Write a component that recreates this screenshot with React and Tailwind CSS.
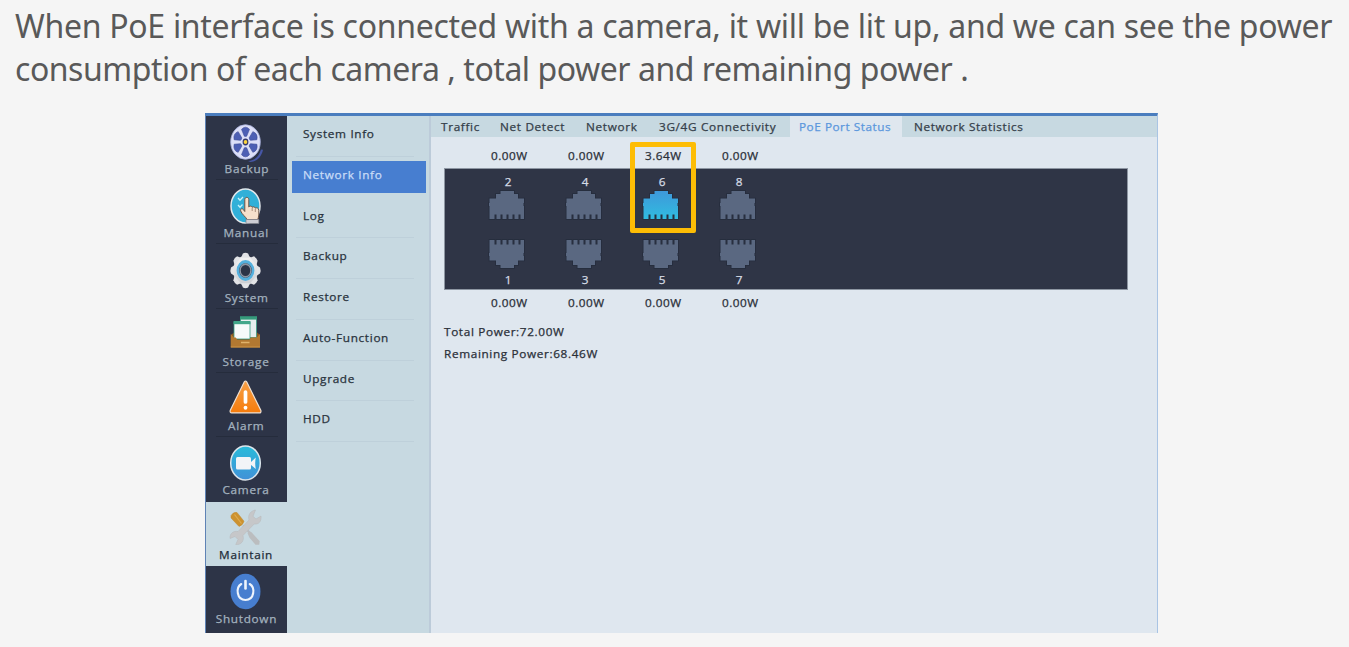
import React from "react";

function ReelIcon() {
  return (
    <svg viewBox="0 0 34 38" className="h-[38px] w-[34px] overflow-visible">
      <path d="M18 37c7-.5 10.500-4 13-11.500l2 .3c-1.500 7.500-6.500 11.900-12.500 12.200z" fill="#4656a6" />
      <ellipse cx="15.500" cy="18" rx="14.800" ry="17.300" fill="#dcdff8" stroke="#a5acd9" strokeWidth=".8" />
      <g transform="translate(15.5 18) scale(1 1.17)">
        {[0, 60, 120, 180, 240, 300].map((a) => (
          <path key={a} transform={`rotate(${a})`} d="M-1.200-5L-4-10.800Q0-14.600 4-10.800L1.200-5Q0-4.400-1.200-5z" fill="#4d5fb4" stroke="#3b4996" strokeWidth=".5" />
        ))}
        <circle r="2.900" fill="#35386b" />
        <circle r="1.800" fill="#fbd43c" />
      </g>
    </svg>
  );
}

function ManualIcon() {
  return (
    <svg viewBox="0 0 34 38" className="h-[38px] w-[34px] overflow-visible">
      <ellipse cx="15.500" cy="18" rx="14.500" ry="17" fill="#31b0d8" stroke="#e2e8ec" strokeWidth="1.500" />
      <path d="M8 10l2 2.200L13 9M8 17l2 2.200L12.500 16.500" fill="none" stroke="#c4f3fb" strokeWidth="1.300" />
      <path d="M14.800 11.500c0-2.800 4-2.800 4 0v7.500c1-1.400 3-1 3.300.3 1-1 2.900-.5 3.100.8 1.500-.8 3.600 0 3.600 2.200v4.700c0 2-.8 3-1 4.500H17c-1-2.500-5-5-6.300-8.500-.6-2.200 1.300-3 2.600-1.500l1.500 2z" fill="#f6e0cb" stroke="#6e5546" strokeWidth="1" />
      <path d="M22.200 20v3M25.300 21v3" stroke="#987b68" strokeWidth=".8" />
      <path d="M16 31.500h12.800v4H16z" fill="#cdcdd3" stroke="#83848c" strokeWidth=".7" />
    </svg>
  );
}

function GearIcon() {
  return (
    <svg viewBox="0 0 34 38" className="h-[38px] w-[34px] overflow-visible">
      <defs>
        <linearGradient id="gear" x1="0" y1="0" x2="0" y2="1">
          <stop offset="0" stopColor="#f4f4f4" />
          <stop offset="1" stopColor="#c9cbd0" />
        </linearGradient>
      </defs>
      <g transform="translate(15.5 17.5) scale(1 1.17)">
        <circle r="12.400" fill="url(#gear)" />
        {[0, 45, 90, 135, 180, 225, 270, 315].map((a) => (
          <path key={a} transform={`rotate(${a})`} d="M-4.500-11L-2.600-14.500Q0-15.700 2.600-14.500L4.500-11z" fill="#e2e3e6" />
        ))}
        <circle r="7.600" fill="#2c3448" stroke="#55b0de" strokeWidth="2.600" />
        <circle r="5.400" fill="#2c3448" stroke="#8d96a5" strokeWidth="1.400" />
      </g>
    </svg>
  );
}

function StorageIcon() {
  return (
    <svg viewBox="0 0 34 38" className="h-[38px] w-[34px] overflow-visible">
      <path d="M.8 18L4 15.500h23l3 2.500v12H.8z" fill="#8c5820" />
      <path d="M10.500.5h16v20h-16z" fill="#e7eeee" stroke="#399c83" strokeWidth=".8" />
      <path d="M10-.8h17V2.600H10z" fill="#359a7b" />
      <path d="M4 5h16v17H4z" fill="#f7fafa" stroke="#399c83" strokeWidth=".8" />
      <path d="M3.500 4h17v3.200h-17z" fill="#43a78a" />
      <path d="M.8 17l3 3.500h2l1.500 2.500h12l1.500-2.500h6L30 17v13.500H.8z" fill="#b27831" />
      <path d="M11 25.500h8.500" stroke="#e0b26a" strokeWidth="1.500" />
      <path d="M.8 29.300H30v1.200H.8z" fill="#c48d42" />
    </svg>
  );
}

function AlarmIcon() {
  return (
    <svg viewBox="0 0 34 38" className="h-[38px] w-[34px] overflow-visible">
      <defs>
        <linearGradient id="alarm" x1="0" y1="0" x2="0" y2="1">
          <stop offset="0" stopColor="#f6a047" />
          <stop offset="1" stopColor="#f67c0c" />
        </linearGradient>
      </defs>
      <path d="M14.300.8Q15.500-.8 16.700.8L30.900 29.500Q31.300 31.900 29.300 31.900H1.700Q-.3 31.900.2 29.500z" fill="url(#alarm)" stroke="#eee0d2" strokeWidth="1.200" />
      <path d="M15.500 11v10" stroke="#fff" strokeWidth="3.700" strokeLinecap="round" />
      <ellipse cx="15.500" cy="26.800" rx="1.900" ry="2" fill="#fff" />
    </svg>
  );
}

function CameraIcon() {
  return (
    <svg viewBox="0 0 34 38" className="h-[38px] w-[34px] overflow-visible">
      <defs>
        <linearGradient id="camera" x1="0" y1="0" x2="0" y2="1">
          <stop offset="0" stopColor="#29bbda" />
          <stop offset="1" stopColor="#4191d7" />
        </linearGradient>
      </defs>
      <ellipse cx="15.500" cy="18" rx="14.800" ry="17" fill="url(#camera)" stroke="#dce5eb" strokeWidth="1.500" />
      <rect x="6" y="12" width="15" height="12.500" rx="1.500" fill="#f2f4f7" />
      <path d="M20.500 17.500L25.800 12.500Q24.600 18 25.800 24L20.500 19.500z" fill="#f2f4f7" />
    </svg>
  );
}

function MaintainIcon() {
  return (
    <svg viewBox="0 0 34 38" className="h-[38px] w-[34px] overflow-visible">
      <path d="M13 15.500L20 23" stroke="#b9bdc0" strokeWidth="2" />
      <path d="M17.500 23c.5-1.800 2.500-2.200 4-.7l8.200 9-.5 3.500h-3.700l-6-7z" fill="#bbbdbf" />
      <path d="M1 5.500Q3.500 1.500 7 2.500l7 8.700q-1 4-5 5.200L1 8z" fill="#cd922f" stroke="#c08a34" strokeWidth=".5" />
      <path d="M4.500 4.500l7 9" stroke="#deab50" strokeWidth="1.200" />
      <path d="M25.500 0C20.500.8 17.500 5 19 10L8 21.500C3.500 20.500-.5 23.500 0 28.500l5-2 3 3-2.300 5c5.500.7 8.800-3.700 7.300-9L24.200 14c4.300.8 7.500-2.500 6.800-8l-5 3-3-2.700z" fill="#c6c7c9" stroke="#b7b9bb" strokeWidth=".5" />
    </svg>
  );
}

function PowerIcon() {
  return (
    <svg viewBox="0 0 34 38" className="h-[38px] w-[34px] overflow-visible">
      <ellipse cx="15.500" cy="17.500" rx="15" ry="17.700" fill="#477ecf" />
      <path d="M11.300 10C5.500 13.500 6.500 26 15.500 26S25.500 13.500 19.700 10" fill="none" stroke="#eef4fc" strokeWidth="2.100" strokeLinecap="round" />
      <path d="M15.500 7v7.500" stroke="#eef4fc" strokeWidth="2.600" strokeLinecap="round" />
    </svg>
  );
}

const NAV = [
  { label: "Backup", Icon: ReelIcon },
  { label: "Manual", Icon: ManualIcon },
  { label: "System", Icon: GearIcon },
  { label: "Storage", Icon: StorageIcon },
  { label: "Alarm", Icon: AlarmIcon },
  { label: "Camera", Icon: CameraIcon },
  { label: "Maintain", Icon: MaintainIcon, active: true },
  { label: "Shutdown", Icon: PowerIcon },
];

const SUBMENU = ["System Info", "Network Info", "Log", "Backup", "Restore", "Auto-Function", "Upgrade", "HDD"];

const TABS = [
  { label: "Traffic", box: "w-[59px] pl-[9.500px]" },
  { label: "Net Detect", box: "w-[86px] pl-[10px]" },
  { label: "Network", box: "w-[73px] pl-[10px]" },
  { label: "3G/4G Connectivity", box: "w-[141px] pl-[10px]" },
  { label: "PoE Port Status", box: "w-[112px] pl-[9px] tracking-[0.480px]", active: true },
  { label: "Network Statistics", box: "pl-[11.500px] tracking-[0.560px]" },
];

const TOP_PORTS = [
  { id: 2, power: "0.00W" },
  { id: 4, power: "0.00W" },
  { id: 6, power: "3.64W", lit: true },
  { id: 8, power: "0.00W" },
];

const BOTTOM_PORTS = [
  { id: 1, power: "0.00W" },
  { id: 3, power: "0.00W" },
  { id: 5, power: "0.00W" },
  { id: 7, power: "0.00W" },
];

/* Text drawn slightly wider than the font's own proportions. */
function Wide({ children, center }) {
  return (
    <span className={`inline-block scale-x-[1.12] ${center ? "origin-center" : "origin-left"}`}>{children}</span>
  );
}

function PortIcon({ lit, flipped }) {
  return (
    <svg viewBox="-1 -1 37 30" className={flipped ? "h-[30px] w-[37px] -scale-y-100" : "h-[30px] w-[37px]"}>
      <defs>
        <linearGradient id="lit" x1="0" y1="0" x2="0" y2="1">
          <stop offset="0" stopColor="#3e98da" />
          <stop offset="1" stopColor="#30bce0" />
        </linearGradient>
      </defs>
      <path
        d="M11.500 0H25V3H29V7.500H35V12H34.500V15H35V28H31.500V23.500H29.500V28H25.500V23.500H23.500V28H19.500V23.500H17.500V28H13.500V23.500H11.500V28H7.500V23.500H5.500V28H.5V15H0V12H.5V7.500H7V3H11.500Z"
        fill={lit ? "url(#lit)" : "#5a6881"}
        stroke="#252c3c"
        strokeWidth="1.600"
        paintOrder="stroke"
      />
    </svg>
  );
}

function PowerRow({ ports, className }) {
  return (
    <div className={`flex pl-[39.500px] leading-[16px] tracking-[0.420px] text-[#2b3039] ${className}`}>
      {ports.map((p) => (
        <div key={p.id} className="w-[77px] text-center"><Wide center>{p.power}</Wide></div>
      ))}
    </div>
  );
}

export default function App() {
  return (
    <div className="h-[647px] w-[1349px] overflow-hidden bg-[#f5f5f5] font-['Open_Sans','Noto_Sans',sans-serif]">
      <header className="h-[113px] whitespace-nowrap pl-[15px] pt-[4px] font-['Noto_Sans','Open_Sans',sans-serif] text-[32px] leading-[43px] text-[#595959]">
        <p className="tracking-[-0.290px]">When PoE interface is connected with a camera, it will be lit up, and we can see the power</p>
        <p className="tracking-[-0.460px]">consumption of each camera , total power and remaining power .</p>
      </header>

      <div className="ml-[205px] flex h-[520px] w-[953px] border-l border-r border-t-[3px] border-l-[#5f83b5] border-r-[#a9c4e4] border-t-[#4a7dbe] bg-[#dfe7ef] text-[10.500px] [-webkit-text-stroke:0.250px]">
        <nav className="flex w-[81px] shrink-0 flex-col bg-[#2d3447]">
          {NAV.map(({ label, Icon, active }, i) => (
            <div
              key={label}
              className={`flex flex-col items-center ${i === 7 ? "h-[67px]" : "h-[64.300px]"} ${
                active ? "bg-[#c7d9e1] text-[#222c38]" : "text-[#a3b2bf]"
              }`}
            >
              <div className="pt-[8px]"><Icon /></div>
              <div className="-mt-px leading-[16px] tracking-[0.640px]"><Wide center>{label}</Wide></div>
              {i < 5 && <div className="mt-[2px] h-px w-[62px] bg-[#252c3c]" />}
            </div>
          ))}
        </nav>

        <aside className="w-[144px] shrink-0 border-r-2 border-[#bccbd9] bg-[#c7d9e1] pl-[5px] text-[#29333d]">
          {SUBMENU.map((s, i) => (
            <div key={s} className={`flex h-[40.780px] w-[134px] flex-col justify-between ${i === 1 ? "pt-[4px]" : "pt-[10px]"}`}>
              <div className={`pl-[10.500px] tracking-[0.600px] ${i === 1 ? "h-[32px] bg-[#477ed0] leading-[28px] text-[#c9dcf7]" : "leading-[16px]"}`}><Wide>{s}</Wide></div>
              {i !== 1 && <div className="ml-[4px] h-px w-[118px] bg-[#bed0da]" />}
            </div>
          ))}
        </aside>

        <main className="flex min-w-0 flex-1 flex-col">
          <div className="flex h-[21px] bg-[#c7d9e1] leading-[23px] tracking-[0.600px] text-[#35404a]">
            {TABS.map((t) => (
              <div key={t.label} className={`shrink-0 whitespace-nowrap ${t.box} ${t.active ? "bg-[#dfe7ef] text-[#5b97dd]" : ""}`}><Wide>{t.label}</Wide></div>
            ))}
          </div>

          <PowerRow ports={TOP_PORTS} className="mt-[11px]" />
          <div className="relative ml-[13px] mt-[4px] h-[122px] w-[684px] border border-[#8d96a2] bg-[#2f3546] leading-[14px] text-[#d5dbe5]">
            <div className="flex pl-[25px] pt-[6px]">
              {TOP_PORTS.map((p) => (
                <div key={p.id} className="flex w-[77px] flex-col items-center">
                  <Wide center>{p.id}</Wide>
                  <span className="mr-[5px] mt-px"><PortIcon lit={p.lit} /></span>
                </div>
              ))}
            </div>
            <div className="flex pl-[25px] pt-[19px]">
              {BOTTOM_PORTS.map((p) => (
                <div key={p.id} className="flex w-[77px] flex-col items-center">
                  <span className="mr-[5px]"><PortIcon flipped /></span>
                  <span className="mt-[4px]"><Wide center>{p.id}</Wide></span>
                </div>
              ))}
            </div>
            <div className="absolute left-[185px] top-[-27px] h-[91px] w-[66px] rounded-[2px] border-[5px] border-[#fdbd05]" />
          </div>
          <PowerRow ports={BOTTOM_PORTS} className="mt-[5px]" />

          <div className="pl-[12.500px] pt-[10px] leading-[22.200px] tracking-[0.580px] text-[#2b3039]">
            <p><Wide>Total Power:72.00W</Wide></p>
            <p><Wide>Remaining Power:68.46W</Wide></p>
          </div>
        </main>
      </div>
    </div>
  );
}
